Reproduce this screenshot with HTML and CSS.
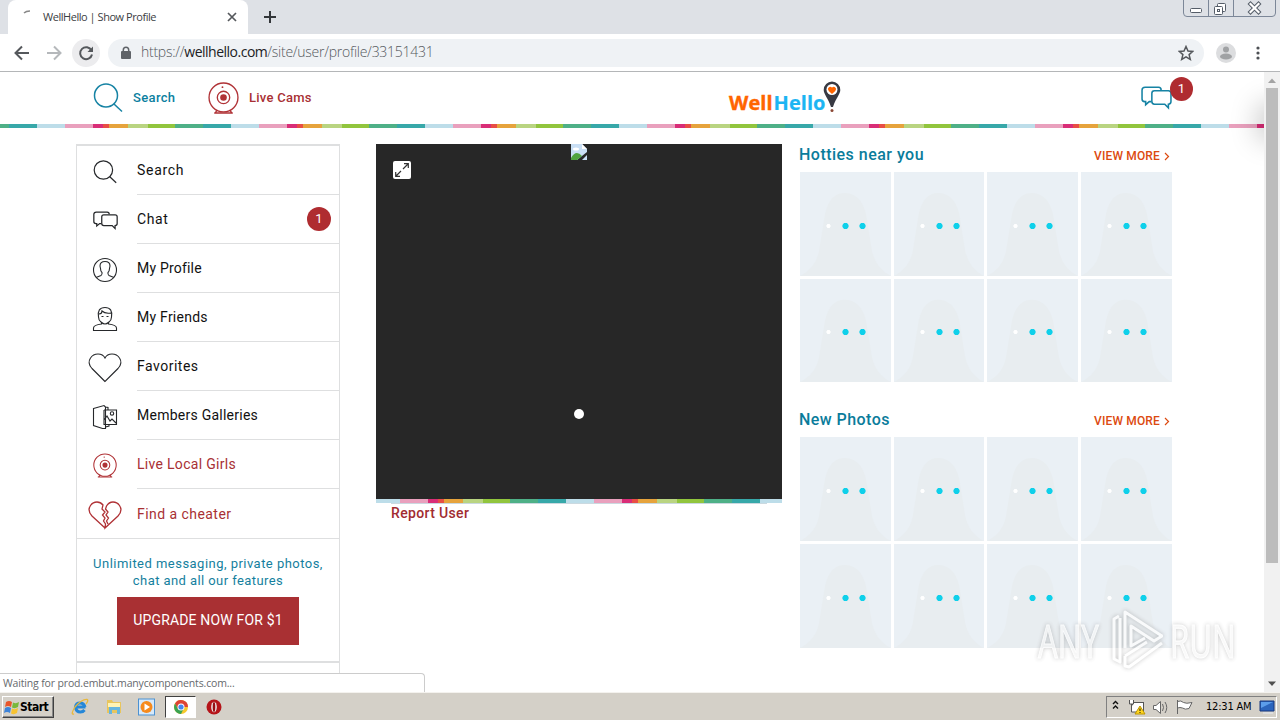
FILE: index.html
```html
<!DOCTYPE html>
<html lang="en">
<head>
<meta charset="utf-8">
<title>WellHello | Show Profile</title>
<link rel="stylesheet" href="styles.css">
</head>
<body>
<svg class="defs" width="0" height="0">
  <symbol id="search" viewBox="0 0 30 30"><circle cx="13" cy="12.500" r="11.500"/><path d="M21 21l8 7.500"/></symbol>
  <symbol id="chat" viewBox="0 0 30 24"><path d="M10 15H8l-3.500 3V15H3.500Q1 15 1 12.500V4Q1 1.200 4 1.200H17Q19.500 1.200 19.500 4"/><path d="M13 4.500H26.500Q29 4.500 29 7V15Q29 17.500 26.500 17.500V21L23 17.500H13Q10.500 17.500 10.500 15V7Q10.500 4.500 13 4.500Z"/></symbol>
  <symbol id="cam" viewBox="0 0 30 31"><circle cx="15" cy="15" r="14"/><circle cx="15" cy="15" r="6"/><circle class="fill" cx="15" cy="15" r="3.200"/><circle class="fill" cx="14" cy="5" r=".9"/><path d="M6 30H24M9 27l-2 3M21 27l2 3"/></symbol>
  <symbol id="tile" viewBox="0 0 91 104" preserveAspectRatio="none"><path d="M0 104Q16 96 19 79L25 42Q30 20 46 21Q61 22 66 42L72 79Q76 97 91 104Z" fill="#e8edf0"/></symbol>
</svg>
<div class="tabstrip">
  <div class="tab">
    <svg class="spinner" width="16" height="16"><path d="M2 4Q4 2 8 2" stroke="#888" fill="none" stroke-width="1.500"/></svg>
    <span class="tab-title">WellHello | Show Profile</span>
    <svg width="10" height="10"><path d="M1 1l8 8M9 1l-8 8" stroke="#55585c" stroke-width="1.700"/></svg>
  </div>
  <svg class="plus" width="12" height="12"><path d="M6 0v12M0 6h12" stroke="#33363a" stroke-width="2"/></svg>
  <svg class="winbtns" width="94" height="18" fill="none" stroke="#7c8798"><path d="M.5 0V13Q.5 16.500 4 16.500H89Q92.500 16.500 92.500 13V0M25.500 0V16M50.500 0V16"/><rect x="7.500" y="8.500" width="11" height="4" rx="1" fill="#fff" stroke="#555d68"/><rect x="34.500" y="3.500" width="8" height="8" rx="1" fill="#fff" stroke="#555d68"/><rect x="31.500" y="6.500" width="8" height="8" rx="1" fill="#fff" stroke="#555d68"/><rect x="34.500" y="9.500" width="2" height="2" stroke="#555d68"/><path d="M67.500 4l8 8M75.500 4l-8 8" stroke="#555d68" stroke-width="4.200" stroke-linecap="square"/><path d="M67.500 4l8 8M75.500 4l-8 8" stroke="#fff" stroke-width="2.200" stroke-linecap="square"/></svg>
</div>
<div class="toolbar">
  <svg width="100" height="36" fill="none" stroke-width="2"><path d="M29 18H16M22 11.500L15.500 18L22 24.500" stroke="#55585c"/><path d="M47 18H60M54 11.500L60.500 18L54 24.500" stroke="#b5b8bb"/><circle cx="86" cy="18" r="14" fill="#ececee"/><path d="M91.500 15.500A6 6 0 1 0 92 19.500" stroke="#55585c"/><path d="M87.500 17H93V11.500Z" fill="#55585c"/></svg>
  <div class="omnibox">
    <svg width="10" height="14"><rect x="0" y="5" width="10" height="8" rx="1" fill="#5f6368"/><path d="M2.300 6V4Q2.300 1.200 5 1.200T7.700 4V6" fill="none" stroke="#5f6368" stroke-width="1.500"/></svg>
    <span class="url">https://<b>wellhello.com</b>/site/user/profile/33151431</span>
    <svg class="star" width="16" height="16"><path d="M8 1.500l2 4.500 4.800.4-3.700 3.200 1.200 4.800L8 11.900l-4.300 2.500 1.200-4.800L1.200 6.400 6 6z" fill="none" stroke="#55585c" stroke-width="1.500"/></svg>
  </div>
  <svg class="avatar" width="20" height="20"><circle cx="10" cy="10" r="10" fill="#dcdddf"/><circle cx="10" cy="6.500" r="3" fill="#a0a2a4"/><ellipse cx="10" cy="13.500" rx="6" ry="3" fill="#a0a2a4"/></svg>
  <svg class="dots" width="4" height="14" fill="#4d5054"><circle cx="2" cy="2" r="1.600"/><circle cx="2" cy="7" r="1.600"/><circle cx="2" cy="12" r="1.600"/></svg>
</div>
<div class="viewport">
  <div class="page">
    <header class="header">
      <svg class="ic blue h-search" width="30" height="30"><use href="#search"/></svg><span class="nav blue-t">Search</span>
      <svg class="ic red h-cam" width="31" height="32"><use href="#cam"/></svg><span class="nav red-t cams">Live Cams</span>
      <div class="logo"><span class="well">Well</span><span class="hello">Hello</span><svg width="18" height="32"><path d="M9 .5A8.500 8.500 0 0 0 .7 9C.7 13 5 17 8 26H10C13 17 17.300 13 17.300 9A8.500 8.500 0 0 0 9 .5Z" fill="#383a43"/><circle cx="9" cy="8.500" r="5.500" fill="#fff"/><path d="M9 13Q4.500 9.500 5 7.500Q6.500 4.500 9 6.500Q11.500 4.500 13 7.500Q13.500 9.500 9 13Z" fill="#ff6500"/><circle cx="9" cy="29.500" r="1.500" fill="#8b4835"/></svg></div>
      <div class="h-chat"><svg class="ic blue" width="31" height="25"><use href="#chat"/></svg><span class="badge">1</span></div>
    </header>
    <div class="stripe"></div>
    <main class="cols">
      <nav class="side">
        <div class="item"><span class="ibox"><svg class="ic sm" width="24" height="24"><use href="#search"/></svg></span><span class="lab"><i class="w1">Search</i></span></div>
        <div class="item"><span class="ibox"><svg class="ic sm" width="25" height="20"><use href="#chat"/></svg></span><span class="lab"><i class="w2">Chat</i><em class="badge">1</em></span></div>
        <div class="item"><span class="ibox"><svg class="ic" width="26" height="26" viewBox="0 0 26 26"><circle cx="13" cy="13" r="11.500"/><path d="M4 20.500L9 18.500Q10.500 17.500 10 15.500Q8.500 14 8.500 11.500L8 9Q8 4.500 13 4.500T18 9L17.500 11.500Q17.500 14 16 15.500Q15.500 17.500 17 18.500L22 20.500"/></svg></span><span class="lab"><i class="w3">My Profile</i></span></div>
        <div class="item"><span class="ibox"><svg class="ic" width="26" height="26" viewBox="0 0 26 26"><path d="M6.500 11Q5 1.500 13 1.500T19.500 11Q19.500 14 17 16Q13 20 9 16Q6.500 14 6.500 11ZM7 8Q10 8 10 5Q13 8 19 7M9.500 10.500H11.500M14.500 10.500H16.500M9.500 16.500V18Q1.500 19 1.500 22V24.500H24.500V22Q24.500 19 16.500 18V16.500"/></svg></span><span class="lab"><i class="w4">My Friends</i></span></div>
        <div class="item"><span class="ibox"><svg class="ic" width="34" height="30" viewBox="0 0 34 30"><path d="M17 28.500L4 15.500Q-1 10 2.500 5Q5 1 10 1Q15 1 17 5Q19 1 24 1Q29 1 31.500 5Q35 10 30 15.500Z"/></svg></span><span class="lab"><i class="w5">Favorites</i></span></div>
        <div class="item"><span class="ibox"><svg class="ic" width="26" height="26" viewBox="0 0 26 26"><path d="M1.500 4.500L12 1.500L13.500 3V24.500L10.500 24.500L1.500 21.500ZM13.500 3L16 3.500V6M12 6H24.500V20.500H12V6M12 16L15 12L18 17L20 15L24 19M13.500 23L17 22V20.500"/><circle cx="20" cy="9.500" r="1.700"/></svg></span><span class="lab"><i class="w6">Members Galleries</i></span></div>
        <div class="item red-t"><span class="ibox"><svg class="ic red" width="24" height="25"><use href="#cam"/></svg></span><span class="lab"><i class="w7">Live Local Girls</i></span></div>
        <div class="item last red-t"><span class="ibox"><svg class="ic red" width="34" height="28" viewBox="0 0 34 28"><path d="M17 27L4 15Q-1 9.500 2.500 4.500Q5 1 9 1Q12.500 1 15 4L14 8L17 11L14.500 14L17 17L15.500 20L17.500 23L17 27L30 15Q35 9.500 31.500 4.500Q29 1 25 1Q21 1 18.500 5L17.500 8L20 11L18 14L20.500 17L18.500 20L20 23"/></svg></span><span class="lab"><i class="w8">Find a cheater</i></span></div>
        <div class="upsell"><p><i class="u1">Unlimited messaging, private photos,</i><br><i class="u2">chat and all our features</i></p><div class="cta">UPGRADE NOW FOR $1</div></div>
      </nav>
      <section class="profile">
        <div class="photo">
          <svg class="expand" width="18" height="18"><rect width="18" height="18" rx="2" fill="#fff"/><path d="M10 8l5-5M11 2.700H15.300V7M8 10l-5 5M2.700 11V15.300H7" fill="none" stroke="#333" stroke-width="1.200"/></svg>
          <svg class="broken" width="16" height="16"><path d="M0 0H11L16 5V8L6 16H0Z" fill="#c9dff5"/><path d="M11 0V5H16Z" fill="#fff"/><path d="M0 14Q5 5 11 12L6 16H0Z" fill="#50a440"/><path d="M11 16L16 11V16Z" fill="#c9dff5"/><ellipse cx="5" cy="5" rx="3" ry="1.500" fill="#fff"/></svg>
          <span class="loader"></span>
        </div>
        <div class="stripe"></div>
        <div class="report">Report User</div>
      </section>
      <aside class="right">
        <div class="head"><h2 class="t1">Hotties near you</h2><span class="more">VIEW MORE <svg width="6" height="9"><path d="M1 1l3.500 3.500L1 8" fill="none" stroke="#dc4a10" stroke-width="1.200"/></svg></span></div>
        <div class="grid">
          <div class="th"><svg><use href="#tile"/></svg></div><div class="th"><svg><use href="#tile"/></svg></div><div class="th"><svg><use href="#tile"/></svg></div><div class="th"><svg><use href="#tile"/></svg></div>
          <div class="th"><svg><use href="#tile"/></svg></div><div class="th"><svg><use href="#tile"/></svg></div><div class="th"><svg><use href="#tile"/></svg></div><div class="th"><svg><use href="#tile"/></svg></div>
        </div>
        <div class="head second"><h2 class="t2">New Photos</h2><span class="more">VIEW MORE <svg width="6" height="9"><path d="M1 1l3.500 3.500L1 8" fill="none" stroke="#dc4a10" stroke-width="1.200"/></svg></span></div>
        <div class="grid tall">
          <div class="th"><svg><use href="#tile"/></svg></div><div class="th"><svg><use href="#tile"/></svg></div><div class="th"><svg><use href="#tile"/></svg></div><div class="th"><svg><use href="#tile"/></svg></div>
          <div class="th"><svg><use href="#tile"/></svg></div><div class="th"><svg><use href="#tile"/></svg></div><div class="th"><svg><use href="#tile"/></svg></div><div class="th"><svg><use href="#tile"/></svg></div>
        </div>
      </aside>
    </main>
    <div class="edge-shadow"></div>
    <div class="status">Waiting for prod.embut.manycomponents.com...</div>
  </div>
  <div class="scroll"><svg width="16" height="16"><path d="M4 11L8 6.500L12 11Z" fill="#a3a3a3"/></svg><div class="thumb"></div><svg class="down" width="16" height="16"><path d="M4 5.500L8 10L12 5.500Z" fill="#505050"/></svg></div>
</div>
<div class="watermark"><span>ANY</span><svg width="60" height="64" viewBox="0 0 60 64" fill="none" stroke="#fff" stroke-width="3" stroke-linejoin="round"><path d="M22 40V4L59 28L51 33L28 18V38L42 30M16 8L11 11V51L17 54V10M22 48V58L26 59L59 35M22 48L44 34"/></svg><span class="run">RUN</span></div>
<div class="taskbar">
  <div class="start"><svg width="16" height="16"><path d="M2 3Q5 1 8 3L7 8Q4 6 1 8Z" fill="#e8562a"/><path d="M9 3.500Q12 5 15 3L14 8Q11 10 8 8.500Z" fill="#79b83c"/><path d="M1 9Q4 7 7 9L6 14Q3 12 0 14Z" fill="#3d83d8"/><path d="M8 9.500Q11 11 14 9L13 14Q10 16 7 14.500Z" fill="#f7c331"/></svg><b>Start</b></div>
  <svg class="q ie" width="18" height="18"><path d="M14.500 9H4.500Q5 5 9 5T14 9M4.500 9Q5 14 9.500 14Q12 14 13.500 12" fill="none" stroke="#2587d8" stroke-width="3"/><path d="M3 16Q-1 17 4 9Q11 1 16 1.500Q18 2 15 6" fill="none" stroke="#e9b83a" stroke-width="1.300"/></svg>
  <svg class="q ex" width="18" height="18"><path d="M2 2H7L8 4H16V15H2Z" fill="#e8c55d"/><path d="M3 5H15V9H3Z" fill="#fff3b4"/><path d="M4 16V9H15V16H12V12H7V16Z" fill="#66b5df"/></svg>
  <svg class="q wm" width="18" height="18"><rect x=".5" y="1" width="16" height="16" fill="#d6e9fa" stroke="#4b91d2"/><circle cx="8.500" cy="9" r="6" fill="#f68a1c"/><path d="M6.500 5.500V12.500L12 9Z" fill="#fff"/></svg>
  <div class="active"><svg width="14" height="14"><circle cx="7" cy="7" r="7" fill="#f7c92d"/><path d="M7 7H14A7 7 0 0 0 1 3.500L4 9Z" fill="#de4435"/><path d="M1 3.500A7 7 0 0 0 7 14L9.500 9H4Z" fill="#3aa352"/><circle cx="7" cy="7" r="3.500" fill="#fff"/><circle cx="7" cy="7" r="2.600" fill="#4587ee"/></svg></div>
  <svg class="op" width="16" height="16"><circle cx="8" cy="8" r="7.500" fill="#b51419"/><ellipse cx="8" cy="8" rx="2.800" ry="5.300" fill="#eee"/><ellipse cx="8" cy="8" rx="1.300" ry="5" fill="#970d12"/></svg>
  <div class="tray">
    <svg width="92" height="18" fill="none" stroke="#111"><path d="M6 6l2.500-2.500L11 6M6 10.500L8.500 8L11 10.500" stroke-width="1.400"/><g stroke="#555" fill="#fff"><rect x="25.500" y="4.500" width="11" height="9"/><path d="M22.500 2V6H26.500V2M24.500 6V14H31"/></g><path d="M33 8L38 16H28Z" fill="#ffd51e" stroke="#bd9500"/><path d="M33 10.500V13M33 14V15"/><path d="M46.500 7.500H49L53.500 3.500V15.500L49 11.500H46.500Z" fill="#fff" stroke="#666"/><path d="M55.500 6Q57.500 9.500 55.500 13M58 4Q61.500 9.500 58 15" stroke="#666"/><path d="M70.500 2V16M70.500 3.500Q74 2 76.500 4.500Q79 6 85 4.500L82 10.500Q78 12 75.500 10Q73 9 70.500 10" fill="#fff" stroke="#666"/></svg>
    <span class="clock">12:31 AM</span>
    <svg class="mon" width="17" height="16"><path d="M1 2H15V12H1Z" fill="#2c65bd" stroke="#16377c"/><path d="M2 3H14L2 9Z" fill="#5c9deb"/><path d="M4 14H14" stroke="#ddd" stroke-width="2"/></svg>
  </div>
</div>
</body>
</html>
```

FILE: styles.css
```css
* { box-sizing: border-box; }
body { margin: 0; width: 1280px; height: 720px; overflow: hidden; background: #fff; font-family: Roboto, "Liberation Sans", sans-serif; position: relative; }
svg { display: block; flex: none; }
i, em { font-style: normal; }
.defs { position: absolute; }

.tabstrip { height: 34px; background: #dee1e6; display: flex; align-items: flex-start; font-family: "Open Sans", sans-serif; }
.tab { margin-left: 8px; width: 240px; height: 34px; background: #fff; border-radius: 8px 8px 0 0; display: flex; align-items: center; padding: 0 11px 0 14px; }
.spinner { margin-top: -1px; }
.tab-title { flex: 1; margin: -2px 0 0 5px; font-size: 11px; letter-spacing: -.46px; color: #3c4043; white-space: nowrap; }
.plus { margin: 11px 0 0 16px; }
.winbtns { margin-left: auto; margin-right: 3px; }

.toolbar { height: 38px; border-bottom: 1px solid #b4b6b8; display: flex; align-items: center; }
.omnibox { margin-left: 8px; width: 1096px; height: 28px; border-radius: 14px; background: #eff2f5; display: flex; align-items: center; padding: 0 10px 0 13px; }
.url { margin: -2px 0 0 10px; flex: 1; font: 300 14px "Open Sans", sans-serif; color: #55595d; white-space: nowrap; letter-spacing: -.26px; }
.url b { font-weight: 400; color: #202124; letter-spacing: -.5px; }
.avatar { margin-left: 12px; }
.dots { margin-left: 20px; }

.viewport { height: 620px; display: flex; }
.page { width: 1264px; overflow: hidden; position: relative; }
.scroll { width: 16px; background: #f1f1f1; display: flex; flex-direction: column; }
.thumb { height: 475px; margin: 0 2px; background: #bcbcbc; }
.down { margin-top: auto; }

.header { height: 52px; display: flex; align-items: center; position: relative; }
.ic { fill: none; stroke: #26282b; stroke-width: 1.100; overflow: visible; color: #26282b; }
.ic.sm { stroke-width: 1.500; }
.ic.blue { stroke: #1683a4; stroke-width: 1.500; }
.ic.red { stroke: #b03236; stroke-width: 1.300; color: #b03236; }
.fill { fill: currentColor; stroke: none; }
.red-t { color: #a83034; }
.blue-t { color: #0b7f9f; }
.h-search { margin-left: 93px; }
.nav { margin: -2px 0 0 10px; font-size: 13px; font-weight: 500; width: 43px; letter-spacing: .35px; white-space: nowrap; }
.h-cam { margin-left: 32px; }
.nav.cams { width: 64px; letter-spacing: .25px; }
.logo { margin: -3px 0 0 416px; display: flex; align-items: center; font: 700 20px/22px "Open Sans", sans-serif; letter-spacing: .05px; }
.logo span { padding-top: 13px; }
.well { color: #ff6500; -webkit-text-stroke: .4px #ff6500; }
.hello { color: #1cb5f3; margin-left: 1px; -webkit-text-stroke: .2px #1cb5f3; }
.logo svg { margin-left: -3px; }
.h-chat { position: absolute; left: 1141px; top: 14px; }
.badge { border-radius: 50%; background: #af2c30; color: #fff; font-size: 13px; text-align: center; width: 23px; height: 24px; line-height: 23px; }
.h-chat .badge { position: absolute; left: 29px; top: -9px; }
.stripe { height: 4px; background: repeating-linear-gradient(90deg, #bddde9 0 28px, #e9a0bd 28px 56px, #d92d77 56px 66px, #e84e45 66px 72px, #e6a33c 72px 91px, #b9d481 91px 111px, #91c53d 111px 138px, #4eb087 138px 166px, #37a8a9 166px 194px); background-position: 37px 0; background-size: 194px 4px; }

.cols { display: flex; align-items: flex-start; }
.side { margin: 16px 0 0 76px; width: 264px; height: 560px; border: 1px solid #dedfe0; border-top-width: 2px; }
.item { display: flex; height: 49px; font-size: 14px; color: #111; }
.item.red-t { color: #a83034; }
.ibox { width: 56px; display: flex; align-items: center; justify-content: center; padding-top: 2px; }
.lab { margin-left: 4px; flex: 1; display: flex; justify-content: space-between; align-items: center; padding-right: 8px; border-bottom: 1px solid #dedfe0; white-space: nowrap; }
.item .badge { width: 24px; }
.last { height: 50px; border-bottom: 1px solid #dedfe0; }
.last .lab { border: 0; }
.w1 { letter-spacing: .7px; }
.w2 { letter-spacing: .6px; }
.w3 { letter-spacing: .2px; }
.w4 { letter-spacing: .25px; }
.w5 { letter-spacing: .5px; }
.w6 { letter-spacing: .25px; }
.w7 { letter-spacing: .3px; }
.w8 { letter-spacing: .45px; }
.u1 { letter-spacing: .47px; }
.u2 { letter-spacing: .42px; }
.upsell { height: 124px; border-bottom: 2px solid #dedfe0; padding-top: 16px; text-align: center; }
.upsell p { margin: 0; font-size: 13px; line-height: 17px; color: #157f9e; white-space: nowrap; }
.cta { margin: 8px auto 0; width: 182px; height: 48px; background: #a93033; color: #fff; font-size: 14px; line-height: 46px; letter-spacing: .17px; }

.profile { margin: 16px 0 0 36px; width: 406px; }
.photo { height: 355px; background: #272727; position: relative; }
.expand { position: absolute; left: 17px; top: 17px; }
.broken { position: absolute; left: 195px; top: 0; }
.loader { position: absolute; left: 198px; top: 265px; width: 10px; height: 10px; border-radius: 5px; background: #fff; }
.profile .stripe { background-position: -4px 0; }
.report { margin-left: 15px; width: 376px; border-top: 1px solid #cbd9e0; color: #a12c31; font-size: 14px; font-weight: 500; line-height: 19px; letter-spacing: .35px; }

.right { margin: 16px 0 0 17px; width: 373px; }
.head { height: 28px; display: flex; justify-content: space-between; padding: 0 2px 0 0; line-height: 22px; }
.head h2 { margin: 0; font-size: 16px; font-weight: 500; color: #0a7c9b; }
.t1 { letter-spacing: .48px; }
.t2 { letter-spacing: .45px; }
.more { display: flex; align-items: center; gap: 4px; height: 24px; font-size: 12px; font-weight: 500; letter-spacing: .15px; color: #dc4a10; }
.second { margin-top: 27px; }
.grid { margin-left: 1px; display: grid; grid-template-columns: 91px 90px 91px 91px; grid-template-rows: 104px 103px; column-gap: 3px; row-gap: 3px; }
.tall { grid-template-rows: 104px 104px; }
.th { background: #eaf0f5; position: relative; }
.th svg { width: 100%; height: 100%; }
.th::after { content: ""; position: absolute; inset: 0; background: radial-gradient(circle at 28.500px 54px, #fff 1.700px, transparent 2.500px), radial-gradient(circle at 45.500px 54px, #0fd0ea 2.700px, transparent 3.500px), radial-gradient(circle at 62.500px 54px, #0fd0ea 2.700px, transparent 3.500px); }
.th:nth-child(n+5)::after { top: -1px; }
.tall .th:nth-child(n+5)::after { top: 0; }

.edge-shadow { position: absolute; right: -30px; top: 38px; width: 30px; height: 24px; box-shadow: 0 0 28px 6px rgba(0,0,0,.22); }
.status { position: absolute; left: -1px; bottom: 0; width: 426px; height: 19px; border: 1px solid #ccc; border-bottom: 0; border-radius: 0 4px 0 0; background: #fff; font: 10.500px/18px "Open Sans", sans-serif; letter-spacing: -.15px; color: #66696d; padding-left: 3px; white-space: nowrap; }

.watermark { position: absolute; left: 1038px; top: 608px; display: flex; align-items: center; font: 400 46px/64px "Open Sans", sans-serif; color: rgba(255,255,255,.8); filter: drop-shadow(0 0 2px rgba(60,60,60,.4)); opacity: .75; }
.watermark span { width: 65px; transform: scaleX(.68); transform-origin: 0 50%; white-space: nowrap; -webkit-text-stroke: 1px #fff; }
.watermark .run { margin-left: 7px; }

.taskbar { height: 28px; background: #d4d0c8; border-top: 1px solid #f4f2ee; display: flex; align-items: center; }
.start { margin-left: 2px; width: 52px; height: 22px; border: 1px solid; border-color: #fff #404040 #404040 #fff; box-shadow: inset -1px -1px #888; display: flex; align-items: center; padding-left: 1px; margin-top: 1px; }
.start b { font: 700 12px "DejaVu Sans Condensed", "DejaVu Sans", sans-serif; letter-spacing: -.5px; }
.ie { margin-left: 17px; }
.ex { margin-left: 16px; }
.wm { margin-left: 15px; }
.active { margin-left: 9px; width: 31px; height: 22px; background: #fff; border: 1px solid; border-color: #404040 #fff #fff #404040; display: flex; align-items: center; justify-content: center; }
.op { margin-left: 10px; }
.tray { margin-left: auto; margin-right: 3px; width: 171px; height: 22px; border: 1px solid; border-color: #808080 #fff #fff #808080; display: flex; align-items: center; }
.clock { margin-left: 7px; width: 47px; font: 11px "DejaVu Sans Condensed", sans-serif; letter-spacing: -.2px; white-space: nowrap; }
.mon { margin-left: 7px; }
```
